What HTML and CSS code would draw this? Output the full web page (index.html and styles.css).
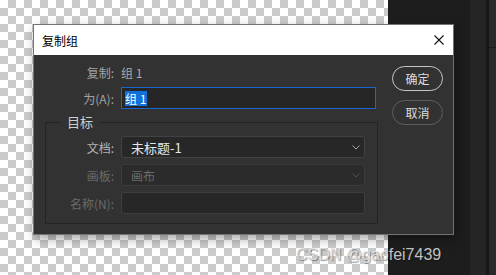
FILE: index.html
```html
<!DOCTYPE html>
<html lang="zh-CN">
<head>
  <meta charset="UTF-8" />
  <title>复制组</title>
  <link rel="stylesheet" href="styles.css">
</head>
<body>
  <div class="stage">
    <!-- 透明画布 -->
    <div class="canvas"></div>
    <!-- 右侧面板区域 -->
    <div class="dock">
      <div class="dock-gap"></div>
      <div class="dock-strip"></div>
      <div class="dock-divider"></div>
      <div class="dock-panel"><div class="dock-head"></div></div>
    </div>

    <div class="dialog">
      <div class="titlebar">
        <span class="title">复制组</span>
        <svg class="close" width="10" height="10" viewBox="0 0 10 10">
          <path d="M0.5 0.5 L9.5 9.5 M9.5 0.5 L0.5 9.5" stroke="#111" stroke-width="1.1" fill="none"/>
        </svg>
      </div>

      <div class="dlg-body">
        <div class="form">
          <div class="row">
            <span class="label">复制:</span>
            <span class="value">组 1</span>
          </div>
          <div class="row">
            <span class="label">为(A):</span>
            <div class="text-input focused"><span class="sel">组 1</span></div>
          </div>

          <fieldset class="group">
            <legend>目标</legend>
            <div class="group-rows">
              <span class="label">文档:</span>
              <div class="select">
                <span>未标题-1</span>
                <svg width="8" height="5" viewBox="0 0 8 5"><path d="M0.5 0.5 L4 4 L7.5 0.5" stroke="#a8a8a8" fill="none"/></svg>
              </div>

              <span class="label disabled">画板:</span>
              <div class="select disabled">
                <span>画布</span>
                <svg width="8" height="5" viewBox="0 0 8 5"><path d="M0.5 0.5 L4 4 L7.5 0.5" stroke="#505050" fill="none"/></svg>
              </div>

              <span class="label disabled">名称(N):</span>
              <div class="text-input disabled"></div>
            </div>
          </fieldset>
        </div>

        <div class="buttons">
          <button class="btn primary">确定</button>
          <button class="btn">取消</button>
        </div>
      </div>
    </div>

    <div class="watermark">CSDN @gaofei7439</div>
  </div>
</body>
</html>
```

FILE: styles.css
```css
html, body {
  margin: 0;
  padding: 0;
}
body {
  font-family: "Noto Sans CJK SC", "Noto Sans", sans-serif;
  font-size: 12px;
}
.stage {
  position: relative;
  width: 496px;
  height: 275px;
  overflow: hidden;
  display: flex;
}
.canvas {
  width: 388px;
  background-color: #fff;
  background-image: conic-gradient(#cbcbcb 25%, #fff 0 50%, #cbcbcb 0 75%, #fff 0);
  background-size: 16px 16px;
}
.dock {
  flex: 1;
  display: flex;
}
.dock-gap {
  width: 82px;
  background: #1d1d1d;
}
.dock-strip {
  width: 16px;
  background: #252525;
}
.dock-divider {
  width: 3px;
  background: #171717;
}
.dock-panel {
  flex: 1;
  background: #292929;
}
.dock-head {
  height: 47px;
  border-bottom: 1px solid #1b1b1b;
}

/* 对话框 */
.dialog {
  position: absolute;
  left: 33px;
  top: 24px;
  width: 419px;
  border: 1px solid #737373;
  background: #323232;
  box-shadow: 2px 4px 10px rgba(0,0,0,0.35);
}
.titlebar {
  height: 30px;
  background: #fff;
  display: flex;
  align-items: center;
  justify-content: space-between;
  padding: 0 9px 0 8px;
}
.title {
  color: #000;
  font-size: 12px;
}
.dlg-body {
  display: flex;
  padding: 6px 10px 10px 11px;
}
.form {
  width: 333px;
}
.row {
  display: grid;
  grid-template-columns: 69px 255px;
  column-gap: 7px;
  align-items: center;
  height: 22px;
  margin-bottom: 4px;
}
.label {
  text-align: right;
  color: #a2a2a2;
  white-space: nowrap;
}
.label.disabled {
  color: #6a6a6a;
}
.value {
  color: #aaaaaa;
}
.text-input {
  box-sizing: border-box;
  height: 22px;
  background: #272727;
  border: 1px solid #3e3e3e;
  border-radius: 2px;
  display: flex;
  align-items: center;
  padding-left: 3px;
}
.text-input.focused {
  border-color: #1667d2;
  background: #262626;
  border-radius: 0;
}
.sel {
  background: #1170dc;
  color: #fff;
  line-height: 15px;
  padding-right: 1px;
}

/* 目标 分组 */
.group {
  margin: 5px 0 0;
  padding: 6px 11px 9px 0;
  border: 1px solid #242424;
  min-width: 0;
}
.group legend {
  margin-left: 15px;
  padding: 0 6px;
  font-size: 13px;
  line-height: 16px;
  color: #cfcfcf;
}
.group-rows {
  display: grid;
  grid-template-columns: 68px 244px;
  column-gap: 7px;
  row-gap: 6px;
  align-items: center;
}
.group-rows .label {
  color: #b4b4b4;
}
.group-rows .label.disabled {
  color: #6a6a6a;
}
.select {
  box-sizing: border-box;
  height: 22px;
  background: #272727;
  border: 1px solid #424242;
  border-radius: 3px;
  display: flex;
  align-items: center;
  justify-content: space-between;
  padding: 0 4px 0 9px;
  color: #e6e6e6;
  font-size: 13px;
}
.select.disabled {
  color: #6c6c6c;
  background: #2b2b2b;
  border-color: #3b3b3b;
  font-size: 12px;
}

/* 按钮 */
.buttons {
  margin-left: 14px;
  display: flex;
  flex-direction: column;
  gap: 9px;
  padding-top: 5px;
}
.btn {
  width: 51px;
  height: 25px;
  border-radius: 13px;
  border: 1.5px solid #5e5e5e;
  background: #323232;
  color: #dedede;
  font-family: inherit;
  font-size: 12px;
  padding: 0;
}
.btn.primary {
  border-color: #c6c6c6;
}

.watermark {
  position: absolute;
  left: 296px;
  top: 246px;
  font-family: "Liberation Sans", Arial, sans-serif;
  font-size: 16px;
  color: rgba(225,225,225,0.85);
  text-shadow: 1px 1px 1px rgba(0,0,0,0.4);
}
```
